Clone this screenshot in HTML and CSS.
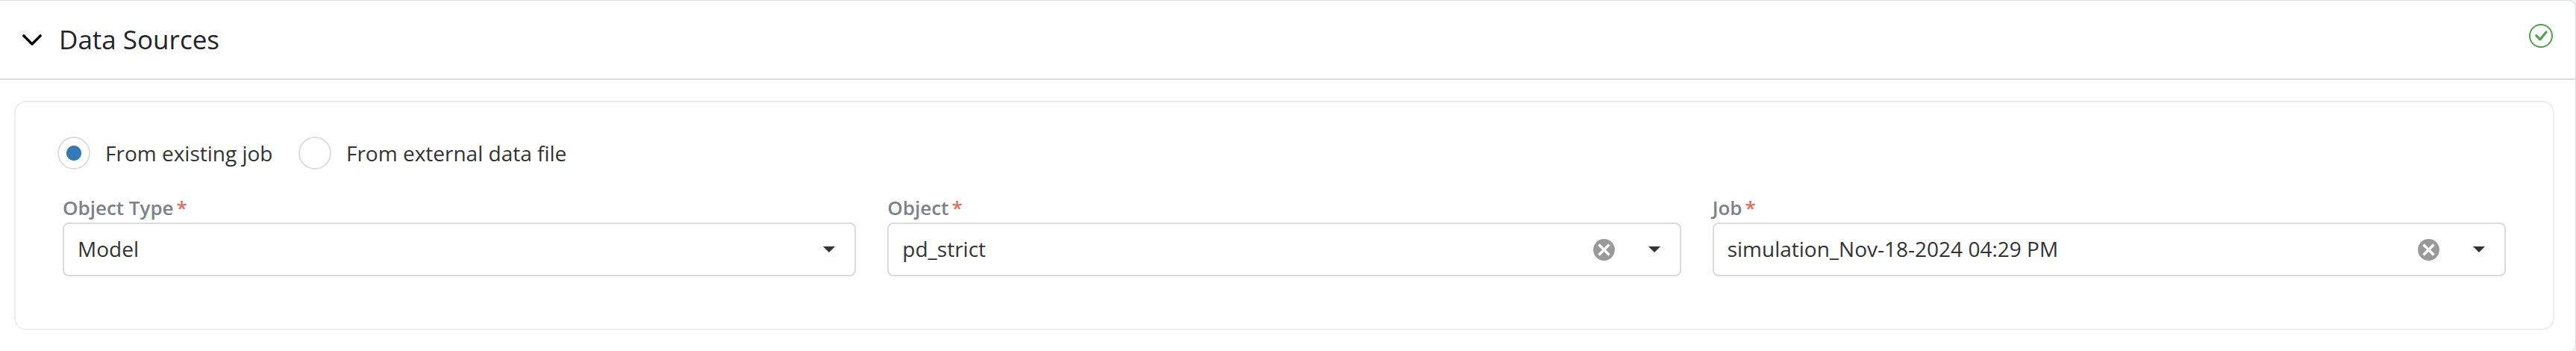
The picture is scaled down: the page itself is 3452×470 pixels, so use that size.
FILE: index.html
```html
<!DOCTYPE html>
<html lang="en">
<head>
<meta charset="utf-8">
<title>Data Sources</title>
<link rel="stylesheet" href="styles.css">
</head>
<body>
<section class="panel">
  <header class="panel-header">
    <svg class="chevron" width="28" height="18" viewBox="0 0 28 18"><path d="M2.8 3.9 14 15 25.2 3.9"/></svg>
    <h2 class="panel-title">Data Sources</h2>
    <svg class="status" width="32" height="32" viewBox="0 0 32 32"><circle cx="16" cy="16" r="15"/><path d="M9.8 15.6 15 20.8 23 11"/></svg>
  </header>
  <div class="card">
    <div class="radios">
      <label class="option"><span class="radio radio-on"></span><span>From existing job</span></label>
      <label class="option"><span class="radio"></span><span>From external data file</span></label>
    </div>
    <div class="fields">
      <div class="field">
        <div class="label">Object Type<span class="required">*</span></div>
        <div class="select"><span class="value">Model</span>
          <svg class="caret" width="16" height="8" viewBox="0 0 16 8"><path d="M0 0H16L8 8Z"/></svg></div>
      </div>
      <div class="field">
        <div class="label">Object<span class="required">*</span></div>
        <div class="select"><span class="value">pd_strict</span>
          <svg class="clear" width="29" height="29" viewBox="0 0 29 29"><circle cx="14.5" cy="14.5" r="14.4"/><path d="M7.5 7.5 21.5 21.5M21.5 7.5 7.5 21.5"/></svg>
          <svg class="caret" width="16" height="8" viewBox="0 0 16 8"><path d="M0 0H16L8 8Z"/></svg></div>
      </div>
      <div class="field">
        <div class="label">Job<span class="required">*</span></div>
        <div class="select"><span class="value">simulation_Nov-18-2024 04:29 PM</span>
          <svg class="clear" width="29" height="29" viewBox="0 0 29 29"><circle cx="14.5" cy="14.5" r="14.4"/><path d="M7.5 7.5 21.5 21.5M21.5 7.5 7.5 21.5"/></svg>
          <svg class="caret" width="16" height="8" viewBox="0 0 16 8"><path d="M0 0H16L8 8Z"/></svg></div>
      </div>
    </div>
  </div>
</section>
</body>
</html>
```
FILE: styles.css
```css
* { box-sizing: border-box; }
html { height: 470px; overflow: hidden; }
body {
  margin: 0;
  height: 470px;
  overflow: hidden;
  background: #edf0f5;
  font-family: "Open Sans", sans-serif;
  font-size: 28px;
  color: #333;
}
svg { display: block; flex: none; }
.panel {
  height: 470px;
  background: #fff;
  border: 1px solid #dcdddf;
  border-left: 0;
  border-bottom: 0;
  border-radius: 0 10px 10px 0;
}
.panel-header {
  display: flex;
  height: 106px;
  padding: 0 30px 0 29px;
  border-bottom: 2px solid #dcddde;
}
.chevron { margin-top: 43px; fill: none; stroke: #000; stroke-width: 3.4; stroke-linecap: round; stroke-linejoin: round; }
.panel-title {
  margin: 28px 0 0 22px;
  font-size: 35px;
  line-height: 47px;
  font-weight: 400;
  color: #212529;
}
.status { margin: 31px 0 0 auto; fill: none; stroke: #4fa14f; stroke-width: 2; }
.status path { stroke-width: 3.2; stroke-linecap: round; stroke-linejoin: round; }
.card {
  height: 307px;
  margin: 28px 28px 0 19px;
  padding: 46px 63px 0 56px;
  border: 2px solid #eee;
  border-radius: 16px;
}
.radios { display: flex; gap: 34.5px; height: 44px; }
.option { display: flex; align-items: center; gap: 20px; white-space: nowrap; line-height: 44px; }
.radio {
  width: 44px;
  height: 44px;
  flex: none;
  border: 2px solid #ddd;
  border-radius: 50%;
}
.radio-on { background: radial-gradient(circle, #337ab7 9.6px, transparent 10.4px); }
.fields {
  display: grid;
  grid-template-columns: repeat(3, 1fr);
  gap: 42px;
  margin: 32px 0 0 7px;
}
.label { height: 39px; line-height: 38px; font-size: 26px; font-weight: 600; color: #7a828a; }
.required { margin-left: 4px; color: #e26a5c; }
.select {
  display: flex;
  align-items: center;
  height: 72px;
  padding: 0 26px 0 18px;
  border: 2px solid #dadbdb;
  border-radius: 8px;
}
.value { flex: 1; padding-bottom: 2px; line-height: 38px; }
.caret { fill: #333; }
.clear { margin-right: 45px; fill: #999; }
.clear path { stroke: #fff; stroke-width: 3.6; }
```
